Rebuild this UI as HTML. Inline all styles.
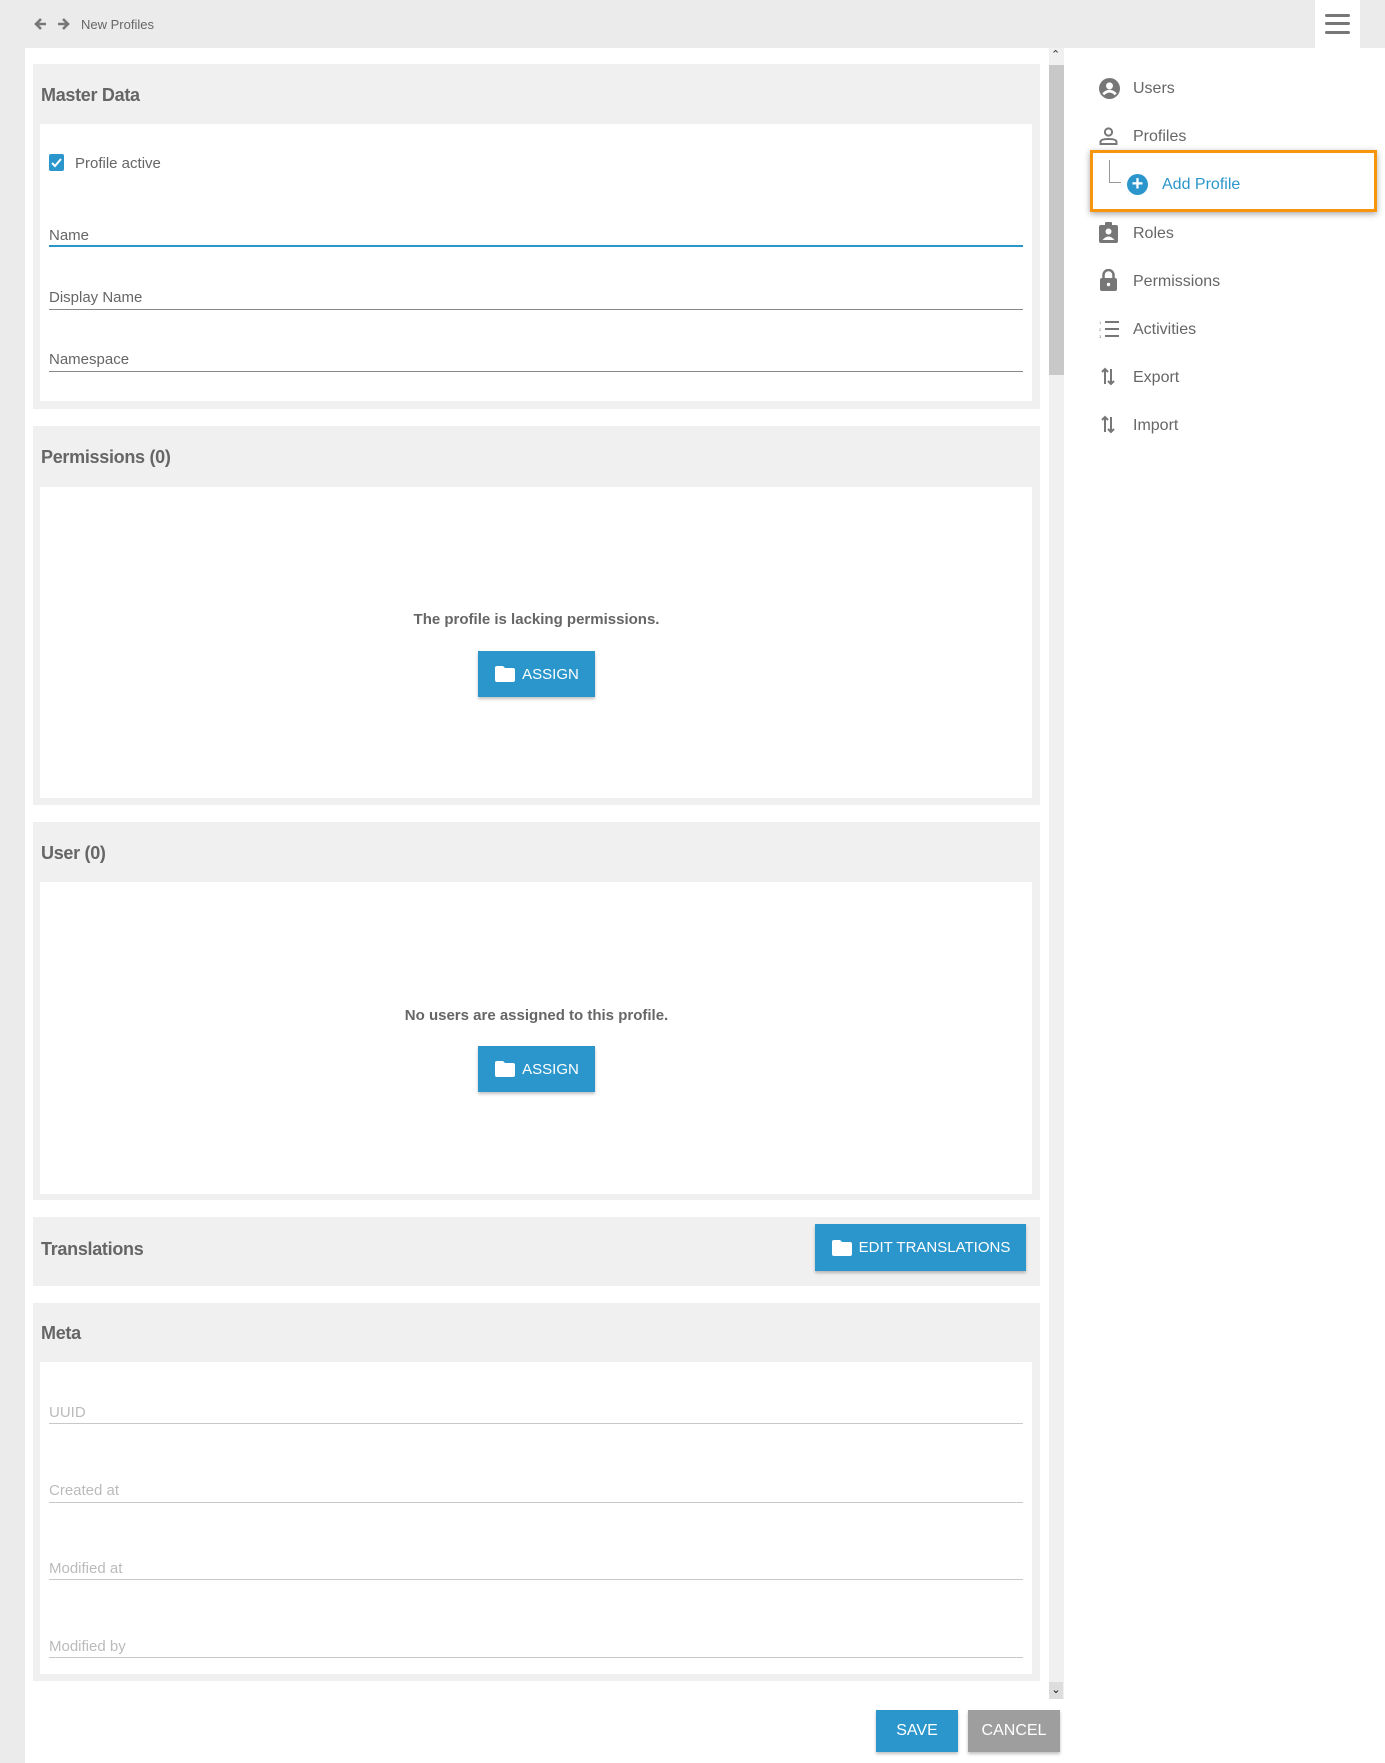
<!DOCTYPE html>
<html><head><meta charset="utf-8"><style>
*{box-sizing:border-box;margin:0;padding:0}
body{width:1385px;height:1763px;position:relative;background:#fff;font-family:"Liberation Sans",Arial,sans-serif;color:#666;overflow:hidden}
.a{position:absolute}
.panel{position:absolute;left:33px;width:1007px;background:#f0f0f0}
.inner{position:absolute;left:7px;right:8px;background:#fff}
.title{position:absolute;left:8px;font-size:18px;font-weight:bold;color:#666;letter-spacing:-0.3px}
.lbl{position:absolute;left:49px;font-size:15px;color:#666}
.line{position:absolute;left:49px;width:974px;height:1px;background:#888}
.ml{color:#bbb}
.mline{background:#c8c8c8}
.btn{position:absolute;background:#2b96cc;color:#fff;font-size:15px;display:flex;align-items:center;justify-content:center;box-shadow:0 2px 3px rgba(0,0,0,.25)}
.msg{position:absolute;left:33px;width:1007px;text-align:center;font-size:15px;font-weight:bold;color:#666}
.nav{position:absolute;left:1133px;font-size:16px;color:#666}
.ic{position:absolute;left:1099px}
</style></head><body>
<div class="a" style="left:0;top:0;width:1385px;height:48px;background:#ebebeb"></div>
<div class="a" style="left:0;top:48px;width:25px;height:1715px;background:#ebebeb"></div>
<svg class="a" style="left:33px;top:16px" width="42" height="16" viewBox="0 0 42 16"><path d="M13 8H3M8 3L3 8l5 5" stroke="#777" stroke-width="2.6" fill="none"/><path d="M25 8h10M30 3l5 5-5 5" stroke="#777" stroke-width="2.6" fill="none"/></svg>
<div class="a" style="left:81px;top:17px;font-size:13px;color:#666">New Profiles</div>
<div class="a" style="left:1315px;top:0;width:45px;height:48px;background:#fff"></div>
<div class="a" style="left:1325px;top:14px;width:25px;height:3px;background:#777;border-radius:2px"></div>
<div class="a" style="left:1325px;top:22px;width:25px;height:3px;background:#777;border-radius:2px"></div>
<div class="a" style="left:1325px;top:31px;width:25px;height:3px;background:#777;border-radius:2px"></div>

<div class="a" style="left:1049px;top:48px;width:15px;height:1651px;background:#f0f0f0"></div>
<div class="a" style="left:1049px;top:65px;width:15px;height:310px;background:#c8c8c8"></div>
<div class="a" style="left:1051px;top:48px;font-size:11px;color:#333">&#8963;</div>
<div class="a" style="left:1049px;top:1682px;width:14px;height:17px;background:#ddd;font-size:11px;color:#111;text-align:center;line-height:17px">&#8964;</div>

<div class="panel" style="top:64px;height:345px">
<div class="title" style="top:21px">Master Data</div>
<div class="inner" style="top:60px;height:277px"></div>
</div>
<div class="a" style="left:49px;top:154px;width:15px;height:17px;background:#2b96cc;border-radius:2px"></div>
<svg class="a" style="left:49px;top:155px" width="15" height="15"><path d="M3 8l3 3 6-7" stroke="#fff" stroke-width="2" fill="none"/></svg>
<div class="lbl" style="left:75px;top:155px">Profile active</div>
<div class="lbl" style="top:227px">Name</div><div class="line" style="top:245px;height:2px;background:#2b96cc"></div>
<div class="lbl" style="top:289px">Display Name</div><div class="line" style="top:309px"></div>
<div class="lbl" style="top:351px">Namespace</div><div class="line" style="top:371px"></div>

<div class="panel" style="top:426px;height:379px">
<div class="title" style="top:21px">Permissions (0)</div>
<div class="inner" style="top:61px;height:311px"></div>
</div>
<div class="msg" style="top:611px">The profile is lacking permissions.</div>
<div class="btn" style="left:478px;top:651px;width:117px;height:46px"><svg width="22" height="18" style="margin-right:6px"><path d="M1 3q0-2 2-2h6l2 2h8q2 0 2 2v10q0 2-2 2H3q-2 0-2-2z" fill="#fff"/></svg>ASSIGN</div>

<div class="panel" style="top:822px;height:378px">
<div class="title" style="top:21px">User (0)</div>
<div class="inner" style="top:60px;height:312px"></div>
</div>
<div class="msg" style="top:1007px">No users are assigned to this profile.</div>
<div class="btn" style="left:478px;top:1046px;width:117px;height:46px"><svg width="22" height="18" style="margin-right:6px"><path d="M1 3q0-2 2-2h6l2 2h8q2 0 2 2v10q0 2-2 2H3q-2 0-2-2z" fill="#fff"/></svg>ASSIGN</div>

<div class="panel" style="top:1217px;height:69px">
<div class="title" style="top:22px">Translations</div>
</div>
<div class="btn" style="left:815px;top:1224px;width:211px;height:47px"><svg width="22" height="18" style="margin-right:6px"><path d="M1 3q0-2 2-2h6l2 2h8q2 0 2 2v10q0 2-2 2H3q-2 0-2-2z" fill="#fff"/></svg>EDIT TRANSLATIONS</div>

<div class="panel" style="top:1303px;height:378px">
<div class="title" style="top:20px">Meta</div>
<div class="inner" style="top:59px;height:312px"></div>
</div>
<div class="lbl ml" style="top:1404px">UUID</div><div class="line mline" style="top:1423px"></div>
<div class="lbl ml" style="top:1482px">Created at</div><div class="line mline" style="top:1502px"></div>
<div class="lbl ml" style="top:1560px">Modified at</div><div class="line mline" style="top:1579px"></div>
<div class="lbl ml" style="top:1638px">Modified by</div><div class="line mline" style="top:1657px"></div>

<div class="btn" style="left:876px;top:1710px;width:82px;height:42px;font-size:16px">SAVE</div>
<div class="btn" style="left:968px;top:1710px;width:92px;height:42px;background:#9e9e9e;font-size:16px">CANCEL</div>

<svg class="ic" style="top:78px" width="21" height="21" viewBox="0 0 20 20"><circle cx="10" cy="10" r="10" fill="#777"/><circle cx="10" cy="7.5" r="3.3" fill="#fff"/><path d="M4 15.5q6-6 12 0" stroke="#fff" stroke-width="2.6" fill="none"/></svg>
<div class="nav" style="top:80px">Users</div>
<svg class="ic" style="top:127px" width="19" height="19" viewBox="0 0 19 19"><circle cx="9.5" cy="5" r="3.6" stroke="#777" stroke-width="2" fill="none"/><path d="M1.5 17v-2q0-3 8-3t8 3v2z" stroke="#777" stroke-width="2" fill="none"/></svg>
<div class="nav" style="top:128px">Profiles</div>
<div class="a" style="left:1090px;top:150px;width:287px;height:62px;border:3px solid #f7950f;box-shadow:0 2px 6px rgba(0,0,0,.35)"></div>
<div class="a" style="left:1109px;top:160px;width:12px;height:23px;border-left:1px solid #999;border-bottom:1px solid #999"></div>
<div class="a" style="left:1127px;top:174px;width:21px;height:21px;border-radius:50%;background:#2b96cc;color:#fff;font-size:20px;font-weight:bold;line-height:20px;text-align:center">+</div>
<div class="nav" style="left:1162px;top:176px;color:#2b96cc">Add Profile</div>
<svg class="ic" style="top:222px" width="19" height="21" viewBox="0 0 19 21"><rect x="0" y="3" width="19" height="18" rx="2" fill="#777"/><rect x="6" y="0" width="7" height="5" rx="1" fill="#777"/><circle cx="9.5" cy="9.5" r="3" fill="#fff"/><path d="M3.5 18q6-7 12 0z" fill="#fff"/></svg>
<div class="nav" style="top:225px">Roles</div>
<svg class="ic" style="top:269px" width="19" height="22" viewBox="0 0 19 22"><path d="M4.5 9V6a5 5 0 0 1 10 0v3" stroke="#777" stroke-width="2.5" fill="none"/><rect x="1" y="9" width="17" height="13" rx="2" fill="#777"/><circle cx="9.5" cy="15.5" r="1.7" fill="#fff"/></svg>
<div class="nav" style="top:273px">Permissions</div>
<svg class="ic" style="top:320px" width="20" height="18" viewBox="0 0 20 18"><path d="M6 2h14M6 9h14M6 16h14" stroke="#777" stroke-width="2"/><text x="0" y="4" font-size="4" fill="#777">1</text><text x="0" y="11" font-size="4" fill="#777">2</text><text x="0" y="18" font-size="4" fill="#777">3</text></svg>
<div class="nav" style="top:321px">Activities</div>
<svg class="ic" style="top:367px" width="19" height="19" viewBox="0 0 19 19"><path d="M6 17V2M3 5l3-3 3 3M12 2v15M9 14l3 3 3-3" stroke="#777" stroke-width="2" fill="none"/></svg>
<div class="nav" style="top:369px">Export</div>
<svg class="ic" style="top:415px" width="19" height="19" viewBox="0 0 19 19"><path d="M6 17V2M3 5l3-3 3 3M12 2v15M9 14l3 3 3-3" stroke="#777" stroke-width="2" fill="none"/></svg>
<div class="nav" style="top:417px">Import</div>
</body></html>
